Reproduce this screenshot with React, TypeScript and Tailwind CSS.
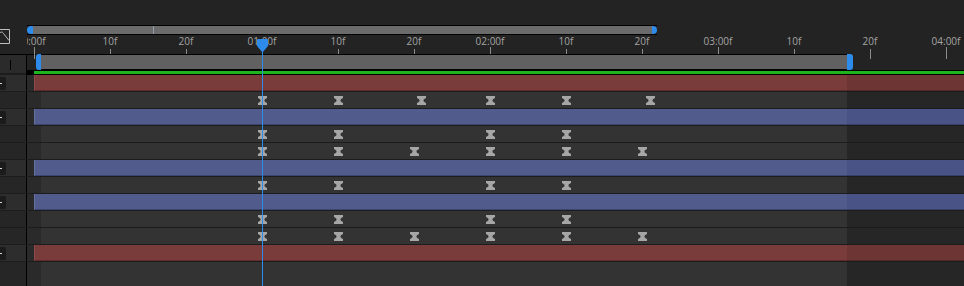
import React from "react";

const BLUE = "#2d8ceb";
const ORIGIN = 27; // x where the timeline area starts (after the left column)
const TICKS = Array.from({ length: 13 }, (_, i) => 34 + 76 * i);
const LABELS = ["0:00f", "10f", "20f", "01:00f", "10f", "20f", "02:00f", "10f", "20f", "03:00f", "10f", "20f", "04:00f"];

type Row = { kind: "red" } | { kind: "blue" } | { kind: "keys"; keys: number[] };

const ROWS: Row[] = [
  { kind: "red" },
  { kind: "keys", keys: [262, 338, 421, 490, 566, 650] },
  { kind: "blue" },
  { kind: "keys", keys: [262, 338, 490, 566] },
  { kind: "keys", keys: [262, 338, 414, 490, 566, 642] },
  { kind: "blue" },
  { kind: "keys", keys: [262, 338, 490, 566] },
  { kind: "blue" },
  { kind: "keys", keys: [262, 338, 490, 566] },
  { kind: "keys", keys: [262, 338, 414, 490, 566, 642] },
  { kind: "red" },
];

function Keyframe({ x }: { x: number }) {
  return (
    <svg
      className="absolute top-[4px]"
      style={{ left: Math.round(x - ORIGIN - 4.5) }}
      width="9"
      height="9"
      viewBox="0 0 9 9"
    >
      <path d="M0 0H9V2C7 3 6.5 3.5 6.5 4.5S7 6 9 7V9H0V7C2 6 2.5 5.5 2.5 4.5S2 3 0 2Z" fill="#a6a6a6" />
    </svg>
  );
}

function LayerRow({ red }: { red: boolean }) {
  return (
    <div className="flex h-[17px] border-b border-[#1c1c1c]">
      <div className="flex w-[26px] items-center bg-[#2d2d2d]">
        <div className="flex h-[13px] w-[6px] items-center rounded-r-[2px] bg-[#1b1b1b]">
          <div className="h-px w-[2px] bg-[#d8d8d8]" />
        </div>
      </div>
      <div className="w-px bg-black" />
      <div className="w-[7px] bg-[#2a2a2a]" />
      {red ? (
        <>
          <div className="w-[813px] border-b border-l border-b-[#5e2c2c] border-l-[#8a4a4a] bg-[#7a3b3b]" />
          <div className="flex-1 border-b border-[#552828] bg-[#6e3535]" />
        </>
      ) : (
        <>
          <div className="w-[813px] border-b border-l border-b-[#3c4470] border-l-[#6470a0] bg-[#515b8c]" />
          <div className="flex-1 border-b border-[#383f66] bg-[#4a5385]" />
        </>
      )}
    </div>
  );
}

function KeyRow({ keys, grow }: { keys: number[]; grow?: boolean }) {
  return (
    <div className={grow ? "flex flex-1" : "flex h-[17px] border-b border-[#1c1c1c]"}>
      <div className="w-[26px] bg-[#262626]" />
      <div className="w-px bg-black" />
      <div className="relative flex flex-1">
        <div className="w-[14px] bg-[#2a2a2a]" />
        <div className="w-[806px] bg-[#333333]" />
        <div className="flex-1 bg-[#262626]" />
        {keys.map((x, i) => (
          <Keyframe key={i} x={x} />
        ))}
      </div>
    </div>
  );
}

function GraphIcon() {
  return (
    <svg className="absolute left-0 top-[3px]" width="11" height="17" viewBox="0 0 11 17" fill="none">
      <path d="M-4 1.5H9.5V15.5H-4" stroke="#bdbdbd" strokeWidth="1" />
      <path d="M-1 6C0.5 3.5 2.5 3.5 3.5 5.5L9 12.5" stroke="#bdbdbd" strokeWidth="1" />
    </svg>
  );
}

export default function App() {
  return (
    <div className="relative flex h-[286px] w-[964px] flex-col overflow-hidden bg-[#232323] font-['Open_Sans',sans-serif]">
      {/* top strip */}
      <div className="h-[25px] shrink-0" />

      {/* navigator + ruler */}
      <div className="relative flex h-[29px] shrink-0">
        <GraphIcon />
        <div className="w-[27px]" />
        <div className="flex flex-1 flex-col">
          <div className="flex h-[10px]">
            <div className="flex border-y border-black">
              <div className="w-[6px] rounded-l-full bg-[#2d8ceb]" />
              <div className="relative w-[619px] bg-[#6b6b6b]">
                <div className="absolute left-[120px] top-0 h-full w-px bg-[#8e9bab]" />
              </div>
              <div className="w-[5px] rounded-r-full bg-[#2d8ceb]" />
            </div>
          </div>
          <div className="relative h-[19px] overflow-hidden">
            {TICKS.map((x, i) => (
              <React.Fragment key={i}>
                <span
                  className="absolute top-0 -translate-x-1/2 whitespace-nowrap text-[10px] leading-[12px] text-[#a3a3a3]"
                  style={{ left: x - ORIGIN }}
                >
                  {LABELS[i]}
                </span>
                <div
                  className={
                    i % 3 === 0
                      ? "absolute top-[12px] h-[7px] w-px bg-[#8c8c8c]"
                      : "absolute top-[14px] h-[5px] w-px bg-[#8c8c8c]"
                  }
                  style={{ left: x - ORIGIN }}
                />
              </React.Fragment>
            ))}
          </div>
        </div>
      </div>

      {/* work area */}
      <div className="flex h-[16px] shrink-0">
        <div className="relative w-[26px] border-t border-black bg-[#2b2b2b]">
          <div className="absolute left-[10px] top-[5px] h-[10px] w-px bg-black" />
        </div>
        <div className="w-px bg-black" />
        <div className="relative flex flex-1">
          <div className="w-[9px] border-t border-black" />
          <div className="w-[5px] rounded-l-[3px] bg-[#2d8ceb]" />
          <div className="w-[806px] border-y border-black bg-[#616161]" />
          <div className="w-[6px] rounded-r-[3px] bg-[#2d8ceb]" />
          <div className="absolute left-[7px] top-0 h-[5px] w-px bg-[#8c8c8c]" />
          <div className="absolute left-[843px] top-0 h-[5px] w-px bg-[#8c8c8c]" />
          <div className="absolute left-[919px] top-0 h-[5px] w-px bg-[#8c8c8c]" />
        </div>
      </div>

      {/* green bar */}
      <div className="flex h-[5px] shrink-0">
        <div className="w-[26px] border-b-2 border-[#1c1c1c] bg-[#2b2b2b]" />
        <div className="w-px bg-black" />
        <div className="flex flex-1 flex-col bg-black py-px">
          <div className="ml-[7px] h-[3px] bg-[#1eb41e]" />
        </div>
      </div>

      {ROWS.map((row, i) =>
        row.kind === "keys" ? (
          <KeyRow key={i} keys={row.keys} />
        ) : (
          <LayerRow key={i} red={row.kind === "red"} />
        )
      )}
      <KeyRow keys={[]} grow />

      {/* playhead */}
      <div className="absolute left-[262px] top-[45px] bottom-0 w-px bg-[#2d8ceb]" />
      <svg className="absolute left-[257px] top-[39px]" width="11" height="14" viewBox="0 0 11 14">
        <path d="M1 0H10Q11 0 11 1V7L5.5 13.5L0 7V1Q0 0 1 0Z" fill={BLUE} />
      </svg>
    </div>
  );
}
